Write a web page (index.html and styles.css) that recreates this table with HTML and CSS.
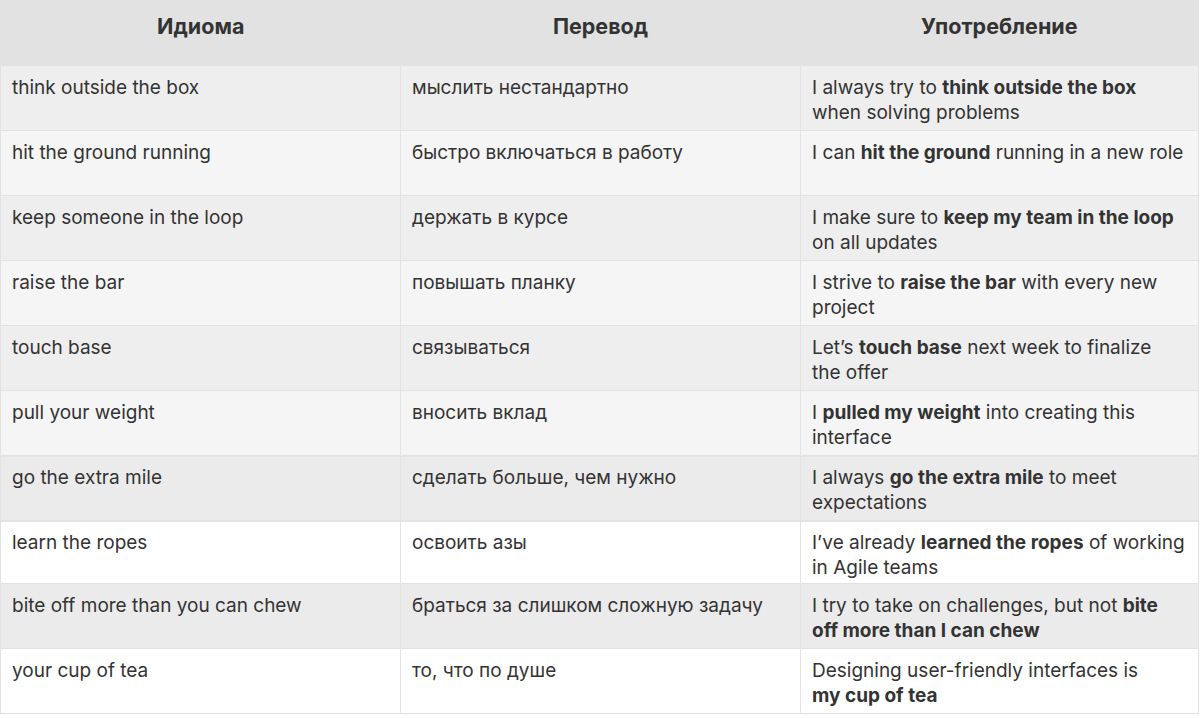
FILE: index.html
```html
<!DOCTYPE html>
<html lang="ru">
<head>
<meta charset="utf-8">
<title>Идиомы</title>
<link rel="stylesheet" href="styles.css">
</head>
<body>
<table class="idioms">
  <colgroup><col class="c1"><col class="c2"><col class="c3"></colgroup>
  <thead>
    <tr><th>Идиома</th><th>Перевод</th><th>Употребление</th></tr>
  </thead>
  <tbody>
    <tr class="r-a"><td>think outside the box</td><td>мыслить нестандартно</td><td>I always try to <b>think outside the box</b> when solving problems</td></tr>
    <tr class="r-b"><td>hit the ground running</td><td>быстро включаться в работу</td><td>I can <b>hit the ground</b> running in a new role</td></tr>
    <tr class="r-a"><td>keep someone in the loop</td><td>держать в курсе</td><td>I make sure to <b>keep my team in the loop</b> on all updates</td></tr>
    <tr class="r-b"><td>raise the bar</td><td>повышать планку</td><td>I strive to <b>raise the bar</b> with every new project</td></tr>
    <tr class="r-a"><td>touch base</td><td>связываться</td><td>Let’s <b>touch base</b> next week to finalize <span class="keep">the offer</span></td></tr>
    <tr class="r-b"><td>pull your weight</td><td>вносить вклад</td><td>I <b>pulled my weight</b> into creating this interface</td></tr>
    <tr class="r-c r-sep"><td>go the extra mile</td><td>сделать больше, чем нужно</td><td>I always <b>go the extra mile</b> to meet expectations</td></tr>
    <tr class="r-w r-short"><td>learn the ropes</td><td>освоить азы</td><td>I’ve already <b>learned the ropes</b> of working in Agile teams</td></tr>
    <tr class="r-c"><td>bite off more than you can chew</td><td>браться за слишком сложную задачу</td><td>I try to take on challenges, but not <b>bite off more than I can chew</b></td></tr>
    <tr class="r-w"><td>your cup of tea</td><td>то, что по душе</td><td>Designing user-friendly interfaces is <b class="keep">my cup of tea</b></td></tr>
  </tbody>
</table>
</body>
</html>
```
FILE: styles.css
```css
html, body {
  margin: 0;
  padding: 0;
  background: #ffffff;
}
body {
  font-family: Inter, "Noto Sans", "DejaVu Sans", sans-serif;
  color: #333333;
}
.idioms {
  width: 1199px;
  border-collapse: collapse;
  table-layout: fixed;
  border: 1px solid #e2e2e2;
  border-top: none;
}
.c1, .c2 { width: 400px; }
.idioms th {
  background: #e2e2e2;
  height: 65px;
  padding: 0 12px 13px;
  box-sizing: border-box;
  font-size: 21.5px;
  font-weight: 700;
  line-height: 28px;
  text-align: center;
  vertical-align: middle;
  color: #333333;
}
.idioms td {
  height: 65px;
  box-sizing: border-box;
  padding: 9px 11px 5px 11px;
  font-size: 19px;
  line-height: 25px;
  vertical-align: top;
  border-top: 1px solid #e3e3e3;
  border-left: 1px solid #e3e3e3;
}
.idioms td:first-child {
  border-left: none;
}
.idioms td b { font-weight: 700; }
.keep { white-space: nowrap; }
.r-a td { background: #eeeeee; }
.r-b td { background: #f5f5f5; }
.r-c td { background: #ebebeb; }
.r-w td { background: #ffffff; }
.r-sep td { border-top: 2px solid #e3e3e3; padding-top: 8px; }
.r-short td { height: 60px; border-top: 2px solid #e3e3e3; padding: 8px 11px 3px 11px; }
.r-short td:first-child { border-left: none; }
```
